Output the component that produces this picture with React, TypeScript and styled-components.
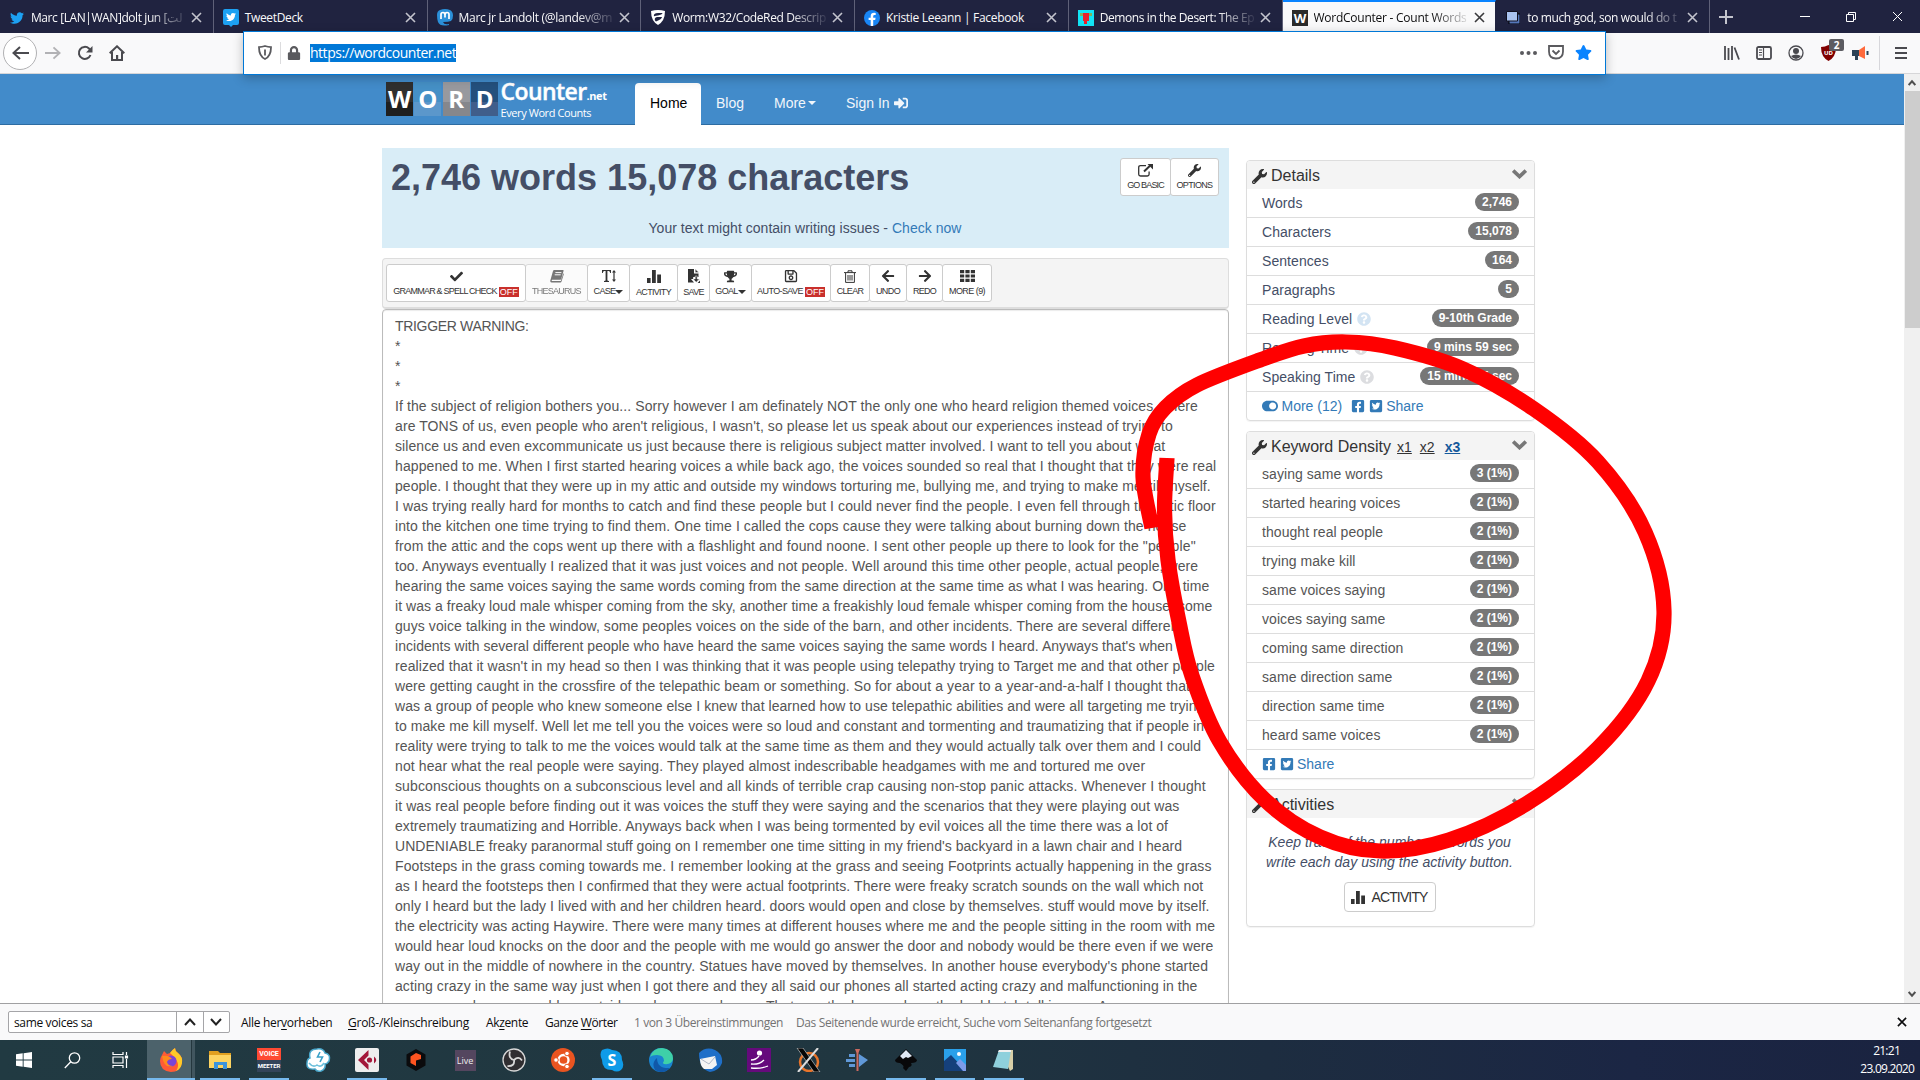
import React from "react";
import styled, { createGlobalStyle, css } from "styled-components";
import {
  FaTwitter, FaCheck, FaTrophy, FaRegSave, FaArrowLeft, FaArrowRight,
  FaWrench, FaQuestionCircle, FaToggleOn, FaFacebookSquare, FaTwitterSquare,
  FaSignInAlt, FaLock, FaStar,
} from "react-icons/fa";

const SANS = `"Liberation Sans", Arial, sans-serif`;
const UI = `"Open Sans", "Noto Sans", sans-serif`;

const Global = createGlobalStyle`
  * { box-sizing: border-box; }
  html, body { margin: 0; padding: 0; overflow: hidden; }
  body { font-family: ${SANS}; font-size: 14px; line-height: 20px; color: #444e66; background: #fff; }
  svg { display: block; flex: none; }
`;

const Screen = styled.div`
  position: relative;
  width: 1920px;
  height: 1080px;
  display: flex;
  flex-direction: column;
  overflow: hidden;
`;

/* ---------- Tab strip ---------- */
const TabStrip = styled.div`
  height: 33px;
  flex: none;
  display: flex;
  background: #202340;
  font-family: ${UI};
  font-size: 12px;
  color: #f9f9fa;
`;
const Tab = styled.div<{ $active?: boolean; $w?: number }>`
  width: ${(p) => p.$w ?? 213.75}px;
  flex: none;
  height: 33px;
  display: flex;
  align-items: center;
  padding: 2px 10px 0 9px;
  border-right: 1px solid #5f6178;
  ${(p) => p.$active && css`
    background: #f9f9fa;
    color: #0c0c0d;
    border-top: 2px solid #0a84ff;
    border-right-color: #202340;
    padding-top: 0;
  `}
`;
const Favicon = styled.span`
  width: 16px;
  height: 16px;
  margin-right: 6px;
  flex: none;
  display: flex;
  align-items: center;
  justify-content: center;
`;
const TabTitle = styled.span<{ $ls: number; $fade?: boolean }>`
  width: 155px;
  white-space: nowrap;
  letter-spacing: ${(p) => p.$ls}px;
  ${(p) => p.$fade && css`mask-image: linear-gradient(90deg, #000 118px, transparent 158px);`}
`;
const CloseMark = styled.span<{ $dark?: boolean }>`
  display: flex;
  margin-left: 5px;
  color: ${(p) => (p.$dark ? "#3a3a3d" : "#c3c4cd")};
`;
const WindowControls = styled.div`
  flex: 1;
  display: flex;
  align-items: center;
  padding-left: 9px;
  color: #fff;
`;
const ControlSlot = styled.span<{ $w: number }>`
  width: ${(p) => p.$w}px;
  display: flex;
  justify-content: center;
`;

/* ---------- Navigation bar ---------- */
const NavBar = styled.div`
  height: 41px;
  flex: none;
  display: flex;
  align-items: center;
  background: #f9f9fa;
  border-bottom: 1px solid #d6d6d8;
  color: #4a4a4f;
`;
const NavButtons = styled.div`
  width: 243px;
  flex: none;
  display: flex;
  align-items: center;
  padding-left: 3px;
`;
const BackCircle = styled.span`
  width: 34px;
  height: 34px;
  border: 1px solid #b1b1b3;
  border-radius: 50%;
  background: #fff;
  display: flex;
  align-items: center;
  justify-content: center;
`;
const NavSlot = styled.span<{ $dim?: boolean; $w?: number }>`
  width: ${(p) => p.$w ?? 32}px;
  display: flex;
  justify-content: center;
  opacity: ${(p) => (p.$dim ? 0.4 : 1)};
`;
const UrlBar = styled.div`
  width: 1363px;
  height: 44px;
  flex: none;
  margin-top: -1px;
  position: relative;
  z-index: 3;
  display: flex;
  align-items: center;
  background: #fff;
  border: 1px solid #0078d7;
  box-shadow: 0 3px 10px rgba(0, 0, 0, 0.25);
  font-family: ${UI};
  font-size: 14px;
  color: #5a5a5e;
`;
const ShieldSlot = styled.span`
  width: 37px;
  height: 22px;
  display: flex;
  align-items: center;
  padding-left: 14px;
  border-right: 1px solid #dcdcde;
`;
const Selected = styled.span`
  height: 18px;
  line-height: 18px;
  background: #0078d7;
  color: #fff;
  letter-spacing: -0.48px;
  margin: 1px 0 0 3px;
  width: 146px;
  white-space: nowrap;
`;
const UrlActions = styled.span`
  margin-left: auto;
  display: flex;
  align-items: center;
  gap: 11px;
  padding-right: 13px;
`;
const ToolbarIcons = styled.div`
  flex: 1;
  display: flex;
  align-items: center;
  padding-left: 110px;
`;
const CountFlag = styled.span`
  position: absolute;
  left: 17px;
  top: -6px;
  width: 15px;
  height: 12px;
  border-radius: 2px;
  background: #5c5c61;
  color: #fff;
  font: bold 10px/12px ${UI};
  text-align: center;
`;
const FlagHost = styled.span`
  position: relative;
  width: 32px;
  display: flex;
  justify-content: center;
`;
const MenuSlot = styled.span`
  height: 34px;
  margin-left: 3px;
  padding-left: 15px;
  border-left: 1px solid #d7d7db;
  display: flex;
  align-items: center;
`;

/* ---------- Page ---------- */
const Viewport = styled.div`
  height: 929px;
  flex: none;
  display: flex;
  overflow: hidden;
`;
const Page = styled.div`
  width: 1904px;
  overflow: hidden;
`;
const Scrollbar = styled.div`
  width: 16px;
  background: #f0f0f0;
  display: flex;
  flex-direction: column;
  align-items: center;
  justify-content: space-between;
  padding: 5px 0 5px;
`;
const Thumb = styled.div`
  width: 15px;
  height: 237px;
  background: #cdcdcd;
  margin: 4px 0 auto;
`;
const SiteHeader = styled.header`
  height: 51px;
  background: #428bca;
  border-bottom: 1px solid #2d6ca2;
  display: flex;
  padding-left: 386px;
  color: #fff;
`;
const Logo = styled.div`
  width: 249px;
  display: flex;
  padding-top: 8px;
`;
const LogoTile = styled.span<{ $a: string; $b: string }>`
  width: 27px;
  height: 34px;
  margin-right: 1.4px;
  background: linear-gradient(${(p) => p.$a} 58%, ${(p) => p.$b} 58%);
  font: bold 24px/34px ${UI};
  text-align: center;
  display: flex;
  justify-content: center;
`;
const LogoText = styled.div`
  margin: -2px 0 0 1px;
  font-family: ${UI};
  white-space: nowrap;
`;
const LogoName = styled.div`
  font-size: 23px;
  font-weight: 600;
  line-height: 23px;
  letter-spacing: -0.6px;
  -webkit-text-stroke: 0.4px #fff;
  small { font-size: 11px; font-weight: bold; letter-spacing: -0.4px; -webkit-text-stroke: 0; }
`;
const LogoTag = styled.div`
  font-size: 11px;
  line-height: 12px;
  letter-spacing: -0.42px;
`;
const HeaderLink = styled.a<{ $w: number; $active?: boolean; $gap?: number }>`
  width: ${(p) => p.$w}px;
  height: 42px;
  margin-top: 9px;
  padding: 0 0 2px 15px;
  display: flex;
  align-items: center;
  gap: ${(p) => p.$gap ?? 4}px;
  color: #f1f6fb;
  white-space: nowrap;
  ${(p) => p.$active && css`
    background: #fff;
    color: #000;
    border-radius: 4px 4px 0 0;
  `}
`;
const Columns = styled.div`
  display: flex;
  padding-left: 382px;
  gap: 17px;
`;
const MainColumn = styled.main`
  width: 847px;
  padding-top: 23px;
`;
const Summary = styled.section`
  height: 100px;
  background: #d9edf7;
  padding: 10px 10px 0 9px;
  display: flex;
  flex-direction: column;
`;
const SummaryTop = styled.div`
  height: 60px;
  display: flex;
  justify-content: space-between;
`;
const Headline = styled.h1`
  margin: 1px 0 0;
  font-size: 36px;
  line-height: 38px;
  white-space: nowrap;
`;
const Notice = styled.p`
  margin: 0;
  text-align: center;
  letter-spacing: 0.03px;
  a { color: #337ab7; }
`;
const ButtonGroup = styled.div`
  display: flex;
  height: 38px;
  margin-right: 1px;
`;
const ToolBtn = styled.button<{ $w: number; $ls?: number; $dim?: boolean }>`
  width: ${(p) => p.$w + 1}px;
  height: 38px;
  margin: 0 -1px 0 0;
  padding: 3px 0 0;
  display: flex;
  flex-direction: column;
  align-items: center;
  background: #fff;
  border: 1px solid #ccc;
  border-radius: 3px;
  color: #333;
  font: 9px/13px ${SANS};
  letter-spacing: ${(p) => p.$ls ?? -0.5}px;
  white-space: nowrap;
  opacity: ${(p) => (p.$dim ? 0.65 : 1)};
`;
const BtnIcon = styled.span`
  height: 16px;
  display: flex;
  align-items: center;
`;
const BtnLabel = styled.span<{ $low?: boolean }>`
  display: flex;
  align-items: center;
  height: 15px;
  margin-top: ${(p) => (p.$low ? 1 : 0)}px;
`;
const Off = styled.span`
  background: #c9302c;
  color: #fff;
  line-height: 10px;
  width: 20px;
  letter-spacing: 0;
  text-align: center;
  margin-left: 2px;
`;
const Toolbar = styled.div`
  margin-top: 10px;
  height: 51px;
  padding: 5px 0 0 3px;
  display: flex;
  background: #f4f4f4;
  border: 1px solid #ddd;
  border-bottom-width: 2px;
  border-radius: 4px;
`;
const Editor = styled.div`
  height: 720px;
  border: 1px solid #bbb;
  border-radius: 4px;
  padding: 6px 12px;
  color: #555;
  box-shadow: inset 0 1px 1px rgba(0, 0, 0, 0.08);
`;
const Line = styled.div<{ $ls: number }>`
  height: 20px;
  white-space: pre;
  letter-spacing: ${(p) => p.$ls}px;
`;

/* ---------- Sidebar ---------- */
const Sidebar = styled.aside`
  width: 289px;
  padding-top: 35px;
  display: flex;
  flex-direction: column;
  gap: 10px;
`;
const Card = styled.section`
  border: 1px solid #ddd;
  border-radius: 4px;
  overflow: hidden;
  box-shadow: 0 1px 1px rgba(0, 0, 0, 0.05);
`;
const CardHeader = styled.h2`
  margin: 0;
  height: 28px;
  padding: 2px 7px 0 5px;
  display: flex;
  align-items: center;
  background: #f4f4f4;
  color: #333;
  font-size: 16px;
  font-weight: normal;
`;
const CardTitle = styled.span`
  margin-left: 4px;
  margin-right: auto;
  display: flex;
  align-items: baseline;
`;
const CollapseMark = styled.span`
  margin-top: -4px;
`;
const Gram = styled.a<{ $on?: boolean }>`
  margin-left: ${(p) => (p.$on ? 8 : 6)}px;
  margin-right: 2px;
  font-size: 14px;
  text-decoration: underline;
  ${(p) => p.$on && css`color: #14599c; font-weight: bold;`}
`;
const Row = styled.div`
  height: 29px;
  padding: 4px 15px 0;
  border-bottom: 1px solid #ddd;
  display: flex;
  justify-content: space-between;
  &:last-child { border-bottom: 0; height: 28px; }
`;
const RowLabel = styled.span<{ $plain?: boolean }>`
  display: flex;
  align-items: center;
  gap: 5px;
  height: 20px;
  white-space: nowrap;
  letter-spacing: 0.06px;
  color: ${(p) => (p.$plain ? "#555" : "#444e66")};
`;
const Badge = styled.span`
  height: 18px;
  padding: 0 7px;
  border-radius: 9px;
  background: #777;
  color: #fff;
  font: bold 12px/18px ${SANS};
`;
const ShareLink = styled.a<{ $push?: boolean }>`
  height: 20px;
  display: flex;
  align-items: center;
  gap: 3.5px;
  color: #337ab7;
  margin-right: ${(p) => (p.$push ? "9px" : "auto")};
`;
const ActivityBody = styled.div`
  height: 108px;
  padding: 14px 2px 0 0;
  display: flex;
  flex-direction: column;
  align-items: center;
  font-style: italic;
  text-align: center;
  white-space: pre;
  letter-spacing: 0.06px;
`;
const ActivityButton = styled.button`
  margin-top: 10px;
  width: 92px;
  height: 30px;
  display: flex;
  align-items: center;
  justify-content: center;
  gap: 6px;
  background: #fff;
  border: 1px solid #ccc;
  border-radius: 4px;
  color: #333;
  font: 14px ${SANS};
  letter-spacing: -0.85px;
  padding: 0;
`;

/* ---------- Find bar ---------- */
const FindBar = styled.div`
  height: 37px;
  flex: none;
  display: flex;
  align-items: center;
  padding-left: 8px;
  background: #f9f9fa;
  border-top: 1px solid #a0a0a2;
  font: 12px ${UI};
  color: #0c0c0d;
`;
const FindBox = styled.div`
  display: flex;
  width: 222px;
  height: 22px;
  margin-right: 11px;
  border: 1px solid #a5a5a8;
  border-radius: 2px;
  background: #fff;
`;
const FindInput = styled.span`
  width: 167px;
  padding-left: 5px;
  line-height: 21px;
  letter-spacing: -0.35px;
`;
const FindStep = styled.span`
  flex: 1;
  display: flex;
  align-items: center;
  justify-content: center;
  border-left: 1px solid #a5a5a8;
`;
const FindOption = styled.span<{ $w: number; $ls: number; $muted?: boolean }>`
  width: ${(p) => p.$w}px;
  white-space: nowrap;
  letter-spacing: ${(p) => p.$ls}px;
  ${(p) => p.$muted && css`color: #737373;`}
  u { text-underline-offset: 2px; }
`;
const FindClose = styled.span`
  margin-left: auto;
  padding-right: 13px;
`;

/* ---------- Taskbar ---------- */
const Taskbar = styled.footer`
  height: 40px;
  flex: none;
  display: flex;
  background: linear-gradient(90deg, #213a42 0%, #203640 45%, #1d2d40 66%, #1b2644 85%, #1a2340 100%);
`;
const SystemCell = styled.span`
  width: 48px;
  display: flex;
  align-items: center;
  justify-content: center;
`;
const AppCells = styled.div`
  display: flex;
  margin-left: 3px;
`;
const AppCell = styled.span<{ $open?: boolean; $active?: boolean }>`
  width: 40px;
  margin-right: 9px;
  display: flex;
  align-items: center;
  justify-content: center;
  border-bottom: 2px solid ${(p) => (p.$open ? "#76b9ed" : "transparent")};
  padding-top: 2px;
  ${(p) => p.$active && css`
    width: 48px;
    margin-right: 5px;
    background: linear-gradient(90deg, #4c626b 44px, #24373e 44px, #24373e 45px, #41565f 45px);
  `}
`;
const Voice = styled.span`
  width: 24px;
  height: 24px;
  display: flex;
  flex-direction: column;
  font: bold 7px/12px Roboto, sans-serif;
  color: #fff;
  text-align: center;
  background: linear-gradient(#ff4a33 50%, #33445a 50%);
  span { letter-spacing: -0.1px; }
  span + span { font-size: 6px; }
`;
const LiveTile = styled.span`
  width: 21px;
  height: 21px;
  background: #54465f;
  color: #eee;
  font: 9px/21px ${UI};
  text-align: center;
`;
const Clock = styled.div`
  margin-left: auto;
  width: 68px;
  padding: 2px 6px 0 0;
  font: 12px/18px ${UI};
  letter-spacing: -0.75px;
  color: #fff;
  display: flex;
  flex-direction: column;
  align-items: flex-end;
  span:first-child { margin-right: 14px; }
`;

const Overlay = styled.svg`
  position: absolute;
  left: 0;
  top: 0;
  z-index: 5;
`;

/* ---------- Small drawings ---------- */
const Cross = ({ s = 11, w = 1.6 }: { s?: number; w?: number }) => (
  <svg width={s} height={s} viewBox="0 0 11 11" stroke="currentColor" strokeWidth={w} fill="none">
    <path d="M1 1l9 9M10 1l-9 9" />
  </svg>
);
const Chevron = ({ up, s = 12, c = "#222", w = 2 }: { up?: boolean; s?: number; c?: string; w?: number }) => (
  <svg width={s} height={s} viewBox="0 0 12 12" fill="none" stroke={c} strokeWidth={w}>
    <path d={up ? "M1 9l5-5.5L11 9" : "M1 3l5 5.5L11 3"} />
  </svg>
);
const Bars = ({ s = 14 }: { s?: number }) => (
  <svg width={s} height={s} viewBox="0 0 14 14" fill="currentColor">
    <path d="M0 9h3.6v5H0zM5 1h3.8v13H5zM10.2 5.5H14V14h-3.8z" />
  </svg>
);
const Trash = () => (
  <svg width="12" height="13" viewBox="0 0 12 13" fill="none" stroke="currentColor">
    <path d="M0 2.6h12M4 2.5V.8h4v1.7M1.6 3v9.4h8.8V3M4 5v5.5M6 5v5.5M8 5v5.5" />
  </svg>
);
const SaveFile = () => (
  <svg width="12" height="14" viewBox="0 0 12 14" fill="currentColor">
    <path d="M0 0h6v4.5h4.5V8H5.2v2H3l3 3.5H0z" />
    <path d="M7.2 0v3.6H11zM7.2 7h2v3h2.3L8.2 13.2 5 10h2.2z" stroke="#fff" strokeWidth=".5" />
    <path d="M9.6 14H12v-2.4z" />
  </svg>
);
const TextHeight = () => (
  <svg width="14" height="12" viewBox="0 0 14 12" fill="currentColor">
    <path d="M0 0h9v3h-.8Q8 1 6.600 1H5.400v9.200q0 .7 1.600.8V12H2v-1q1.600-.1 1.600-.8V1H2.400Q1 1 .8 3H0z" />
    <path d="M12 0l2 2.600h-1.400v6.800H14L12 12l-2-2.600h1.400V2.600H10z" />
  </svg>
);
const Grid9 = () => (
  <svg width="15" height="12" viewBox="0 0 15 12" fill="currentColor">
    <path d="M0 0h4.200v3.200H0zM5.400 0h4.200v3.200H5.400zM10.800 0H15v3.200h-4.200zM0 4.400h4.200v3.200H0zM5.400 4.400h4.200v3.200H5.400zM10.800 4.400H15v3.200h-4.200zM0 8.800h4.200V12H0zM5.400 8.800h4.200V12H5.400zM10.800 8.800H15V12h-4.200z" />
  </svg>
);
const Book = () => (
  <svg width="14" height="13" viewBox="0 0 14 13">
    <path d="M4.200 0H13q.8 0 .6.800L11.200 9q-.2.800-1 .8H2L1.600 11h9.200l2.600-7.800q.6.300.4 1L11.500 11.600q-.2 1-1.200 1H1.500Q0 12.400.3 10.400L3 1q.3-1 1.200-1z" fill="currentColor" />
    <path d="M5.400 2.600h6M4.700 4.800h6" stroke="#fff" />
  </svg>
);
const External = () => (
  <svg width="15" height="13" viewBox="0 0 15 13" fill="none" stroke="currentColor" strokeWidth="1.300">
    <path d="M8 1.600H2.500Q.7 1.600.7 3.400v6.800q0 1.800 1.800 1.800h6.800q1.800 0 1.800-1.800V7.500" />
    <path d="M6 7.500l6-5.700" strokeWidth="2" />
    <path d="M9.500 0H15v5.500z" fill="currentColor" stroke="none" />
  </svg>
);
const Collapse = () => (
  <svg width="15" height="10" viewBox="0 0 15 10" fill="none" stroke="#777" strokeWidth="3.600">
    <path d="M1.200 1.600l6.300 6 6.300-6" />
  </svg>
);
const DropMark = () => (
  <svg width="8" height="4" viewBox="0 0 8 4" fill="currentColor"><path d="M0 0h8L4 4z" /></svg>
);

const FAV = {
  tweetdeck: (
    <svg width="16" height="18" viewBox="0 0 16 18"><path d="M2 0h12q2 0 2 2v12q0 2-2 2h-4l-2 2-2-2H2q-2 0-2-2V2q0-2 2-2z" fill="#1da1f2" /><g transform="translate(3 3)"><FaTwitter size={10} color="#fff" /></g></svg>
  ),
  mastodon: (
    <svg width="16" height="17" viewBox="0 0 16 17"><path d="M3 1Q8-.8 13 1q3 1.500 3 5.500 0 4-2 5.500-2.500 1-8 1 1 3 6 2v1Q3 18 1 13 0 10 0 6q0-4 3-5z" fill="#2b90d9" /><path d="M4 10V5.500Q4 3.500 6 3.500T8 6v2.500V6q0-2.500 2-2.500t2 2V10" stroke="#fff" strokeWidth="1.700" fill="none" /></svg>
  ),
  fsecure: (
    <svg width="14" height="15" viewBox="0 0 14 15"><path d="M0 1Q7-1 14 1q0 10-7 14Q0 11 0 1z" fill="#fff" /><path d="M3 6.500Q2 3 7 3h4.500q0 2-8 3zM4 10.500q-1-3 2-3.500h5q0 2-6 4.500z" fill="#202340" /></svg>
  ),
  facebook: (
    <svg width="16" height="16" viewBox="0 0 16 16"><circle cx="8" cy="8" r="8" fill="#1986f5" /><path d="M9.200 16v-6h2l.4-2.300H9.200V6.300q0-1.200 1.300-1.200h1.200V3Q6.800 2.200 6.700 6v1.700H4.600V10h2.100v6z" fill="#fff" /></svg>
  ),
  desert: (
    <svg width="16" height="16" viewBox="0 0 16 16"><rect width="16" height="16" fill="#12e4f5" /><path d="M2 3h12v3H2z" fill="#80b060" /><path d="M5 3h6v8H9v3H6v-3H5z" fill="#e8202c" /></svg>
  ),
  word: (
    <svg width="16" height="16" viewBox="0 0 16 16"><rect width="16" height="16" fill="#2b2b2b" /><text x="8" y="13" textAnchor="middle" fontFamily="Open Sans" fontWeight="bold" fontSize="13" fill="#fff">W</text></svg>
  ),
  pages: (
    <svg width="14" height="13" viewBox="0 0 14 13"><path d="M3 3h11v10H3z" fill="#5577bb" stroke="#000" /><path d="M.5.5h11v9.500H.5z" fill="#a9c3f0" stroke="#101020" /></svg>
  ),
};

const TABS: { icon: React.ReactNode; title: string; ls: number; fade?: boolean; active?: boolean }[] = [
  { icon: <FaTwitter size={14} color="#1da1f2" />, title: "Marc [LAN|WAN]dolt jun [لت", ls: -0.42, fade: true },
  { icon: FAV.tweetdeck, title: "TweetDeck", ls: -0.35 },
  { icon: FAV.mastodon, title: "Marc jr Landolt (@landev@m", ls: -0.28, fade: true },
  { icon: FAV.fsecure, title: "Worm:W32/CodeRed Descrip", ls: -0.36, fade: true },
  { icon: FAV.facebook, title: "Kristie Leeann | Facebook", ls: -0.3 },
  { icon: FAV.desert, title: "Demons in the Desert: The Ep", ls: -0.42, fade: true },
  { icon: FAV.word, title: "WordCounter - Count Words", ls: -0.25, fade: true, active: true },
  { icon: FAV.pages, title: "to much god, son would do t", ls: -0.38, fade: true },
];

/* Each line carries the tracking that justifies it to its measured width. */
const LINES: [string, number][] = [
  ["TRIGGER WARNING:", -0.32],
  ["*", 0],
  ["*", 0],
  ["*", 0],
  ["If the subject of religion bothers you... Sorry however I am definately NOT the only one who heard religion themed voices. There", 0.088],
  ["are TONS of us, even people who aren't religious, I wasn't, so please let us speak about our experiences instead of trying to", 0.09],
  ["silence us and even excommunicate us just because there is religious subject matter involved. I want to tell you about what", 0.075],
  ["happened to me. When I first started hearing voices a while back ago, the voices sounded so real that I thought that they were real", 0.103],
  ["people. I thought that they were up in my attic and outside my windows torturing me, bullying me, and trying to make me kill myself.", 0.037],
  ["I was trying really hard for months to catch and find these people but I could never find the people. I even fell through the attic floor", 0.1],
  ["into the kitchen one time trying to find them. One time I called the cops cause they were talking about burning down the house", 0.098],
  ["from the attic and the cops went up there with a flashlight and found noone. I sent other people up there to look for the \"people\"", 0.114],
  ["too. Anyways eventually I realized that it was just voices and not people. Well around this time other people, actual people, were", 0.086],
  ["hearing the same voices saying the same words coming from the same direction at the same time as what I was hearing. One time", 0.04],
  ["it was a freaky loud male whisper coming from the sky, another time a freakishly loud female whisper coming from the house, some", 0.047],
  ["guys voice talking in the window, some peoples voices on the side of the barn, and other incidents. There are several different", 0.077],
  ["incidents with several different people who have heard the same voices saying the same words I heard. Anyways that's when I", 0.035],
  ["realized that it wasn't in my head so then I was thinking that it was people using telepathy trying to Target me and that other people", 0.09],
  ["were getting caught in the crossfire of the telepathic beam or something. So for about a year to a year-and-a-half I thought that it", 0.1],
  ["was a group of people who knew someone else I knew that learned how to use telepathic abilities and were all targeting me trying", 0.055],
  ["to make me kill myself. Well let me tell you the voices were so loud and constant and tormenting and traumatizing that if people in", 0.065],
  ["reality were trying to talk to me the voices would talk at the same time as them and they would actually talk over them and I could", 0.065],
  ["not hear what the real people were saying. They played almost indescribable headgames with me and tortured me over", 0.105],
  ["subconscious thoughts on a subconscious level and all kinds of terrible crap causing non-stop panic attacks. Whenever I thought", 0.115],
  ["it was real people before finding out it was voices the stuff they were saying and the scenarios that they were playing out was", 0.087],
  ["extremely traumatizing and Horrible. Anyways back when I was being tormented by evil voices all the time there was a lot of", 0.06],
  ["UNDENIABLE freaky paranormal stuff going on I remember one time sitting in my friend's backyard in a lawn chair and I heard", 0.04],
  ["Footsteps in the grass coming towards me. I remember looking at the grass and seeing Footprints actually happening in the grass", 0.106],
  ["as I heard the footsteps then I confirmed that they were actual footprints. There were freaky scratch sounds on the wall which not", 0.084],
  ["only I heard but the lady I lived with and her children heard. doors would open and close by themselves. stuff would move by itself.", 0.065],
  ["the electricity was acting Haywire. There were many times at different houses where me and the people sitting in the room with me", 0.1],
  ["would hear loud knocks on the door and the people with me would go answer the door and nobody would be there even if we were", 0.085],
  ["way out in the middle of nowhere in the country. Statues have moved by themselves. In another house everybody's phone started", 0.098],
  ["acting crazy in the same way just when I got there and they all said our phones all started acting crazy and malfunctioning in the", 0.085],
  ["same way when we would go outside and use our phones. That was the house where the bad batch talking me. A", 0.085],
];

const KEYWORDS = [
  ["saying same words", "3 (1%)"], ["started hearing voices", "2 (1%)"], ["thought real people", "2 (1%)"],
  ["trying make kill", "2 (1%)"], ["same voices saying", "2 (1%)"], ["voices saying same", "2 (1%)"],
  ["coming same direction", "2 (1%)"], ["same direction same", "2 (1%)"], ["direction same time", "2 (1%)"],
  ["heard same voices", "2 (1%)"],
];

const DETAILS: [string, string, string?][] = [
  ["Words", "2,746"], ["Characters", "15,078"], ["Sentences", "164"], ["Paragraphs", "5"],
  ["Reading Level", "9-10th Grade", "#d3e4f3"], ["Reading Time", "9 mins 59 sec", "#dcdde0"],
  ["Speaking Time", "15 mins 15 sec", "#dcdde0"],
];

/* Freehand marker stroke: anchor points joined by a Catmull-Rom spline. */
const MARKER: [number, number][] = [
  [1152, 528], [1143, 477], [1149, 434], [1165, 408], [1197, 385], [1260, 360], [1304, 346], [1346, 342], [1395, 348], [1463, 369],
  [1534, 409], [1598, 462], [1645, 532], [1664, 611], [1648, 681], [1598, 748], [1526, 804],
  [1449, 840], [1380, 851], [1320, 837], [1265, 800], [1220, 742], [1192, 676], [1179, 622], [1168, 560], [1164.5, 510], [1167, 458],
];
const spline = (p: [number, number][]) =>
  p.slice(0, -1).reduce((d, b, i) => {
    const a = p[i - 1] ?? b, c = p[i + 1], e = p[i + 2] ?? c;
    return `${d} C${b[0] + (c[0] - a[0]) / 6} ${b[1] + (c[1] - a[1]) / 6} ${c[0] - (e[0] - b[0]) / 6} ${c[1] - (e[1] - b[1]) / 6} ${c[0]} ${c[1]}`;
  }, `M${p[0][0]} ${p[0][1]}`);

const HeaderOf = ({ children }: { children: React.ReactNode }) => (
  <CardHeader>
    <FaWrench size={15} />
    <CardTitle>{children}</CardTitle>
    <CollapseMark><Collapse /></CollapseMark>
  </CardHeader>
);
const Share = () => (
  <ShareLink><FaFacebookSquare size={14} /><FaTwitterSquare size={14} />Share</ShareLink>
);

const Tool = ({ w, icon, label, off, caret, dim, ls, low }: {
  w: number; icon: React.ReactNode; label: string; off?: boolean; caret?: boolean; dim?: boolean; ls?: number; low?: boolean;
}) => (
  <ToolBtn $w={w} $dim={dim} $ls={ls}>
    <BtnIcon>{icon}</BtnIcon>
    <BtnLabel $low={low}>{label}{caret && <DropMark />}{off && <Off>OFF</Off>}</BtnLabel>
  </ToolBtn>
);

const APPS: { art: React.ReactNode; open?: boolean; active?: boolean }[] = [
  { active: true, open: true, art: (
    <svg width="24" height="24" viewBox="0 0 24 24"><path d="M3 7l2-4 3 3 3-1q2-3 5-5 0 3 3 5 5 4 4 10-2 9-11 9Q1 23 1 13q0-3 2-6z" fill="#ff5a36" /><path d="M11 5q2-3 5-5 0 3 3 5 5 4 4 10-1 6-6 8 6-8-6-18z" fill="#ffca28" /><circle cx="12" cy="13" r="5.500" fill="#7a45d6" /><path d="M3 8q5-1 8 1l2 2q-4 0-5 3 1 4 6 4-9 3-11-10z" fill="#ff8a1c" /></svg>) },
  { open: true, art: (
    <svg width="23" height="20" viewBox="0 0 23 20"><path d="M0 1h9l2 2h11v4H0z" fill="#e0a020" /><path d="M0 5h22v13H0z" fill="#fcd462" /><path d="M5 19v-7h13v7h-4v-4H9v4z" fill="#3c94dc" /></svg>) },
  { open: true, art: <Voice><span>VOICE</span><span>MEETER</span></Voice> },
  { art: (
    <svg width="25" height="24" viewBox="0 0 25 24"><path d="M4 10Q2 1 11 1q6-1 8 4 6 1 4 8-2 3-4 3 1 5-4 7-4 1-6-2-9 1-8-6 0-4 3-5z" fill="#fff" stroke="#4aa8cc" strokeWidth="1.500" /><path d="M14 4l-2.500 5h5L14 14" stroke="#3aa0c8" strokeWidth="1.600" fill="none" /><path d="M3 15q4 5 8 2 4 3 7-2" stroke="#6cc0dc" strokeWidth="1.500" fill="none" /></svg>) },
  { open: true, art: (
    <svg width="24" height="24" viewBox="0 0 24 24"><rect width="24" height="24" rx="2" fill="#eee" /><path d="M13.500 2v5.500L9 12l4.500 4.500V22L3 12z" fill="#a3183a" /><circle cx="14.500" cy="12" r="2.600" fill="#a3183a" /><path d="M19 8.500q4.500 3.500 0 7z" fill="#a3183a" /></svg>) },
  { art: (
    <svg width="22" height="24" viewBox="0 0 22 24"><path d="M11 1l9.500 5.500v11L11 23l-9.500-5.500v-11z" fill="#0b0b0d" /><path d="M5.500 8.500L11 5l5 2v4l-5 1.500V18l-5.500-3z" fill="#ff5420" /></svg>) },
  { art: <LiveTile>Live</LiveTile> },
  { art: (
    <svg width="24" height="24" viewBox="0 0 24 24"><circle cx="12" cy="12" r="11" fill="#302e31" stroke="#d8d8d8" strokeWidth="1.300" /><path d="M12 12Q6 10.500 8 3.500M12 12q4.500-4.500 8 .5M12 12q1 6.500-6.500 6" stroke="#d8d8d8" strokeWidth="1.800" fill="none" /></svg>) },
  { art: (
    <svg width="24" height="24" viewBox="0 0 24 24"><circle cx="12" cy="12" r="12" fill="#e95420" /><circle cx="12.500" cy="12" r="5" stroke="#fff" strokeWidth="2.300" fill="none" /><g fill="#fff" stroke="#e95420"><circle cx="5" cy="12" r="2.300" /><circle cx="16" cy="5.500" r="2.300" /><circle cx="16" cy="18.500" r="2.300" /></g></svg>) },
  { open: true, art: (
    <svg width="24" height="24" viewBox="0 0 24 24"><path d="M2 2Q8-1 12 2q10 0 10 10 3 6-1 10-4 3-9 0Q2 22 2 12-1 6 2 2z" fill="#0f9be8" /><text x="12" y="18" textAnchor="middle" fontFamily="Open Sans" fontWeight="bold" fontSize="16" fill="#fff">S</text></svg>) },
  { art: (
    <svg width="24" height="24" viewBox="0 0 24 24"><circle cx="12" cy="12" r="12" fill="#1a83d0" /><path d="M1 9Q4 0 13 0q11 1 11 11-1 6-9 5-2-1 0-3Q15 7 8 7 3 7 1 9z" fill="#3ed0a8" /><path d="M8 10q0 11 13 10-7 7-15 2-4-7 2-12z" fill="#1058a8" /></svg>) },
  { art: (
    <svg width="25" height="24" viewBox="0 0 25 24"><path d="M1 5Q8-2 17 2q8 4 7 13-3 8-12 9Q1 21 1 5z" fill="#1f6fc8" /><path d="M2 11l15-3 2 9-5 4H6q-4-3-4-10z" fill="#f4f4f4" /><path d="M3 11l8 5 6-7" stroke="#b0b8c8" fill="none" /></svg>) },
  { art: (
    <svg width="24" height="24" viewBox="0 0 24 24"><rect width="24" height="24" fill="#650a7c" /><path d="M4 20q10 1 17-2M4 16q8 1 13-4M4 12q5 0 8-4" stroke="#fff" strokeWidth="1.300" fill="none" /><circle cx="12.500" cy="5" r="2.600" fill="#fff" /></svg>) },
  { art: (
    <svg width="25" height="24" viewBox="0 0 25 24"><circle cx="13" cy="14" r="9" stroke="#e8742a" strokeWidth="2.500" fill="none" /><path d="M1 0h6l17 24h-6z" fill="#050505" stroke="#ddd" strokeWidth=".6" /><path d="M22 0L2 24" stroke="#ddd" strokeWidth="2" /></svg>) },
  { art: (
    <svg width="22" height="22" viewBox="0 0 22 22"><path d="M3 5h6v3H3zM0 10h9v3H0zM3 15h6v3H3zM13 5l9 6-9 7z" fill="#6098d8" /><path d="M9 0h5l-1.500 4v18h-2V4z" fill="#cc6a60" /></svg>) },
  { open: true, art: (
    <svg width="24" height="24" viewBox="0 0 24 24"><path d="M12 1l11 11q0 3-6 3 2 3-2 4l-3 4-3-3q2-2-3-5-5 0-5-3z" fill="#08080a" /><path d="M12 2l6 6-4 2-2-1-3 2-3-3z" fill="#dfe8f4" /></svg>) },
  { open: true, art: (
    <svg width="22" height="22" viewBox="0 0 22 22"><rect width="22" height="22" fill="#2aa0ea" /><path d="M0 12l7-6 15 16H0z" fill="#15407c" /><path d="M12 14l4-4 6 6v6h-3z" fill="#7d9bea" /><circle cx="15" cy="5" r="2" fill="#fff" /></svg>) },
  { open: true, art: (
    <svg width="24" height="24" viewBox="0 0 24 24"><path d="M8 2h13v19l-3 2z" fill="#d8cfa8" /><path d="M7 2h12l-3 19-15-2z" fill="#8fd0dc" /><path d="M7 2h12v2H6z" fill="#f0f0f0" /></svg>) },
];

export default function App() {
  return (
    <>
      <Global />
      <Screen>
        <TabStrip>
          {TABS.map((t) => (
            <Tab key={t.title} $active={t.active}>
              <Favicon>{t.icon}</Favicon>
              <TabTitle $ls={t.ls} $fade={t.fade}>{t.title}</TabTitle>
              <CloseMark $dark={t.active}><Cross /></CloseMark>
            </Tab>
          ))}
          <WindowControls>
            <svg width="14" height="14" viewBox="0 0 14 14" stroke="#c3c4cd" strokeWidth="2"><path d="M7 0v14M0 7h14" /></svg>
            <ControlSlot $w={49} />
            <ControlSlot $w={46}><svg width="10" height="10" viewBox="0 0 10 10" stroke="#fff"><path d="M0 4.500h10" /></svg></ControlSlot>
            <ControlSlot $w={46}><svg width="10" height="10" viewBox="0 0 10 10" stroke="#fff" fill="none"><path d="M.5 2.500h7v7h-7zM2.500 2.500v-2h7v7h-2" /></svg></ControlSlot>
            <ControlSlot $w={46}><Cross s={11} w={1} /></ControlSlot>
          </WindowControls>
        </TabStrip>

        <NavBar>
          <NavButtons>
            <BackCircle>
              <svg width="17" height="14" viewBox="0 0 17 14" stroke="#4a4a4f" strokeWidth="2" fill="none"><path d="M17 7H1.500M8 1L1.500 7 8 13" /></svg>
            </BackCircle>
            <NavSlot $dim><svg width="16" height="14" viewBox="0 0 17 14" stroke="#4a4a4f" strokeWidth="2" fill="none"><path d="M0 7h15.500M9 1l6.500 6L9 13" /></svg></NavSlot>
            <NavSlot><svg width="16" height="16" viewBox="0 0 16 16" stroke="#4a4a4f" strokeWidth="2" fill="none"><path d="M13.500 10A6 6 0 1 1 12 3.500l2 2" /><path d="M15.500 1v6.500H9z" fill="#4a4a4f" stroke="none" /></svg></NavSlot>
            <NavSlot><svg width="16" height="16" viewBox="0 0 16 16" stroke="#4a4a4f" strokeWidth="2" fill="none"><path d="M.7 8.300L8 1.300l7.300 7M3 7v8h10V7" /><path d="M7 10h2.200v5H7z" fill="#4a4a4f" stroke="none" /></svg></NavSlot>
          </NavButtons>
          <UrlBar>
            <ShieldSlot><svg width="14" height="15" viewBox="0 0 14 15" fill="none" stroke="#5a5a5e" strokeWidth="1.800"><path d="M7 1Q10 2 13 2.200 13 11 7 14 1 11 1 2.200 4 2 7 1z" /><path d="M7 4.500v6" /></svg></ShieldSlot>
            <NavSlot $w={26}><FaLock size={14} /></NavSlot>
            <Selected>https://wordcounter.net</Selected>
            <UrlActions>
              <svg width="17" height="4" viewBox="0 0 17 4" fill="#5a5a5e"><circle cx="2" cy="2" r="2" /><circle cx="8.500" cy="2" r="2" /><circle cx="15" cy="2" r="2" /></svg>
              <svg width="16" height="15" viewBox="0 0 16 15" fill="none" stroke="#5a5a5e" strokeWidth="1.800"><path d="M1 1h14v5.500q0 7-7 7t-7-7z" /><path d="M4.500 5.500L8 9l3.500-3.500" /></svg>
              <FaStar size={17} color="#0a84ff" />
            </UrlActions>
          </UrlBar>
          <ToolbarIcons>
            <NavSlot><svg width="16" height="14" viewBox="0 0 16 14" stroke="#4a4a4f" strokeWidth="1.800"><path d="M1 0v14M4.500 2v12M8 0v14M10.500 1.500L15 13.500" /></svg></NavSlot>
            <NavSlot><svg width="16" height="14" viewBox="0 0 16 14" stroke="#4a4a4f" strokeWidth="1.800" fill="none"><rect x="1" y="1" width="14" height="12" rx="1.500" /><path d="M7.500 1v12M3 4h3M3 6.500h3M3 9h3" strokeWidth="1.200" /></svg></NavSlot>
            <NavSlot><svg width="16" height="16" viewBox="0 0 16 16" fill="#4a4a4f"><circle cx="8" cy="8" r="7" fill="none" stroke="#4a4a4f" strokeWidth="1.300" /><circle cx="8" cy="6" r="3" /><path d="M3 11q5-3 10 0-2 3-5 3t-5-3z" /></svg></NavSlot>
            <FlagHost>
              <svg width="15" height="16" viewBox="0 0 15 16"><path d="M7.500 0Q11 2 15 2q0 10-7.500 14Q0 12 0 2q4 0 7.500-2z" fill="#800000" /><text x="7.500" y="10" textAnchor="middle" fontSize="6" fontFamily="Open Sans" fontWeight="bold" fill="#fff">UD</text></svg>
              <CountFlag>2</CountFlag>
            </FlagHost>
            <NavSlot><svg width="17" height="16" viewBox="0 0 17 16"><path d="M0 5h7v6H6v4H3v-4H0z" fill="#2b4257" /><path d="M7 5l6-4v13l-6-3z" fill="#ff6a3c" /><path d="M14.500 6h2v4h-2z" fill="#2b4257" /></svg></NavSlot>
            <MenuSlot><svg width="12" height="12" viewBox="0 0 12 12" stroke="#4a4a4f" strokeWidth="2"><path d="M0 1h12M0 6h12M0 11h12" /></svg></MenuSlot>
          </ToolbarIcons>
        </NavBar>

        <Viewport>
          <Page>
            <SiteHeader>
              <Logo>
                <LogoTile $a="#2f2f2f" $b="#1f1f1f">W</LogoTile>
                <LogoTile $a="#4590c6" $b="#5b97cb">O</LogoTile>
                <LogoTile $a="#98999e" $b="#86878c">R</LogoTile>
                <LogoTile $a="#24507d" $b="#405e8b">D</LogoTile>
                <LogoText>
                  <LogoName>Counter<small>.net</small></LogoName>
                  <LogoTag>Every Word Counts</LogoTag>
                </LogoText>
              </Logo>
              <HeaderLink $w={66} $active>Home</HeaderLink>
              <HeaderLink $w={58}>Blog</HeaderLink>
              <HeaderLink $w={72} $gap={2}>More<DropMark /></HeaderLink>
              <HeaderLink $w={90}>Sign In <FaSignInAlt size={14} /></HeaderLink>
            </SiteHeader>
            <Columns>
              <MainColumn>
                <Summary>
                  <SummaryTop>
                    <Headline>2,746 words 15,078 characters</Headline>
                    <ButtonGroup>
                      <Tool w={50} icon={<External />} label="GO BASIC" ls={-0.85} />
                      <Tool w={48} icon={<FaWrench size={13} />} label="OPTIONS" ls={-0.65} />
                    </ButtonGroup>
                  </SummaryTop>
                  <Notice>Your text might contain writing issues - <a>Check now</a></Notice>
                </Summary>
                <Toolbar>
                  <Tool w={139} icon={<FaCheck size={13} />} label="GRAMMAR & SPELL CHECK" off ls={-0.78} />
                  <Tool w={62} icon={<Book />} label="THESAURUS" dim ls={-0.75} />
                  <Tool w={42} icon={<TextHeight />} label="CASE" caret ls={-0.65} />
                  <Tool w={48} icon={<Bars />} label="ACTIVITY" low ls={-0.7} />
                  <Tool w={32} icon={<SaveFile />} label="SAVE" low ls={-0.75} />
                  <Tool w={42} icon={<FaTrophy size={13} />} label="GOAL" caret ls={-0.65} />
                  <Tool w={79} icon={<FaRegSave size={14} />} label="AUTO-SAVE" off ls={-0.6} />
                  <Tool w={39} icon={<Trash />} label="CLEAR" ls={-0.7} />
                  <Tool w={37} icon={<FaArrowLeft size={14} />} label="UNDO" ls={-0.6} />
                  <Tool w={36} icon={<FaArrowRight size={14} />} label="REDO" ls={-0.75} />
                  <Tool w={49} icon={<Grid9 />} label="MORE (9)" ls={-0.55} />
                </Toolbar>
                <Editor>
                  {LINES.map(([text, ls], i) => <Line key={i} $ls={ls}>{text}</Line>)}
                </Editor>
              </MainColumn>
              <Sidebar>
                <Card>
                  <HeaderOf>Details</HeaderOf>
                  {DETAILS.map(([k, v, help]) => (
                    <Row key={k}>
                      <RowLabel>{k}{help && <FaQuestionCircle size={14} color={help} />}</RowLabel>
                      <Badge>{v}</Badge>
                    </Row>
                  ))}
                  <Row>
                    <ShareLink $push><FaToggleOn size={16} />More (12)</ShareLink>
                    <Share />
                  </Row>
                </Card>
                <Card>
                  <HeaderOf>Keyword Density<Gram>x1</Gram><Gram>x2</Gram><Gram $on>x3</Gram></HeaderOf>
                  {KEYWORDS.map(([k, v]) => (
                    <Row key={k}><RowLabel $plain>{k}</RowLabel><Badge>{v}</Badge></Row>
                  ))}
                  <Row><Share /></Row>
                </Card>
                <Card>
                  <HeaderOf>Activities</HeaderOf>
                  <ActivityBody>
                    {"Keep track of the number of words you\nwrite each day using the activity button."}
                    <ActivityButton><Bars />ACTIVITY</ActivityButton>
                  </ActivityBody>
                </Card>
              </Sidebar>
            </Columns>
          </Page>
          <Scrollbar>
            <Chevron up s={8} c="#505050" w={3} />
            <Thumb />
            <Chevron s={8} c="#505050" w={3} />
          </Scrollbar>
        </Viewport>

        <FindBar>
          <FindBox>
            <FindInput>same voices sa</FindInput>
            <FindStep><Chevron up /></FindStep>
            <FindStep><Chevron /></FindStep>
          </FindBox>
          <FindOption $w={107} $ls={-0.3}>Alle her<u>v</u>orheben</FindOption>
          <FindOption $w={138} $ls={-0.25}><u>G</u>roß-/Kleinschreibung</FindOption>
          <FindOption $w={59} $ls={-0.35}>Ak<u>z</u>ente</FindOption>
          <FindOption $w={89} $ls={-0.4}>Ganze <u>W</u>örter</FindOption>
          <FindOption $w={162} $ls={-0.4} $muted>1 von 3 Übereinstimmungen</FindOption>
          <FindOption $w={360} $ls={-0.38} $muted>Das Seitenende wurde erreicht, Suche vom Seitenanfang fortgesetzt</FindOption>
          <FindClose><Cross s={10} w={1.8} /></FindClose>
        </FindBar>

        <Taskbar>
          <SystemCell><svg width="16" height="16" viewBox="0 0 16 16" fill="#fff"><path d="M0 2.300L6.700 1.300V7.600H0zM7.600 1.200L16 0v7.600H7.600zM0 8.400h6.700v6.300L0 13.700zM7.600 8.400H16V16l-8.400-1.200z" /></svg></SystemCell>
          <SystemCell><svg width="17" height="17" viewBox="0 0 17 17" fill="none" stroke="#fff" strokeWidth="1.300"><circle cx="10.500" cy="6" r="5.200" /><path d="M6.800 9.700L.8 16" /></svg></SystemCell>
          <SystemCell><svg width="17" height="16" viewBox="0 0 17 16" fill="none" stroke="#fff" strokeWidth="1.200"><path d="M1 0v2.500h10V0M1 16v-2.500h10V16M1 5h10v6H1zM14.500 0v3M14.500 7v9" /><path d="M13.500 4h2v2h-2z" fill="#fff" /></svg></SystemCell>
          <AppCells>
            {APPS.map((a, i) => <AppCell key={i} $open={a.open} $active={a.active}>{a.art}</AppCell>)}
          </AppCells>
          <Clock><span>21:21</span><span>23.09.2020</span></Clock>
        </Taskbar>

        <Overlay width="1920" height="1080" viewBox="0 0 1920 1080" fill="none" stroke="#f00" strokeWidth="15.2">
          <path d={spline(MARKER)} />
        </Overlay>
      </Screen>
    </>
  );
}
